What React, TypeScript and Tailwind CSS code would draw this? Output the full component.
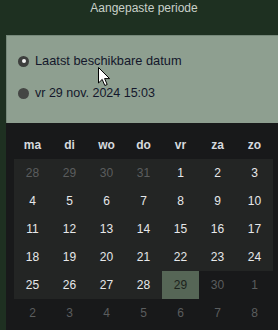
import React from "react";

const headers = ["ma", "di", "wo", "do", "vr", "za", "zo"];

type Cell = { d: number; muted: boolean; bg: "none" | "light" | "sel" };

const rows: Cell[][] = [
  [28, 29, 30, 31, 1, 2, 3].map((d, i) => ({ d, muted: i < 4, bg: "light" as const })),
  [4, 5, 6, 7, 8, 9, 10].map((d) => ({ d, muted: false, bg: "light" as const })),
  [11, 12, 13, 14, 15, 16, 17].map((d) => ({ d, muted: false, bg: "light" as const })),
  [18, 19, 20, 21, 22, 23, 24].map((d) => ({ d, muted: false, bg: "light" as const })),
  [25, 26, 27, 28, 29, 30, 1].map((d, i) => ({
    d,
    muted: i > 4,
    bg: i < 4 ? ("light" as const) : i === 4 ? ("sel" as const) : ("none" as const),
  })),
  [2, 3, 4, 5, 6, 7, 8].map((d) => ({ d, muted: true, bg: "none" as const })),
];

export default function App() {
  return (
    <div
      className="w-[278px] h-[330px] overflow-hidden bg-[#1e3021] flex flex-col"
      style={{ fontFamily: '"Liberation Sans", Arial, sans-serif' }}
    >
      <div className="h-[35px] flex justify-center pl-[10px] pt-[1px] text-[12px] text-[#c9d1c9] leading-[14px]">
        Aangepaste periode
      </div>
      <div className="ml-[6px] flex-1 flex flex-col">
        <div className="relative h-[88px] bg-[#8e9f90] border-t border-l border-[#76887a] flex flex-col pt-[18px] pl-[11px] gap-[18px]">
          <div className="flex items-center gap-[6px] h-[14px]">
            <div className="w-[11px] h-[11px] rounded-full bg-[#3d3f3d] flex items-center justify-center">
              <div className="w-[4px] h-[4px] rounded-full bg-[#f2f2f2]" />
            </div>
            <span className="text-[12.8px] leading-[14px] text-[#14172b]">Laatst beschikbare datum</span>
          </div>
          <div className="flex items-center gap-[6px] h-[14px]">
            <div className="w-[11px] h-[11px] rounded-full bg-[#444644]" />
            <span className="text-[12.5px] leading-[14px] text-[#14172b]">vr 29 nov. 2024 15:03</span>
          </div>
          <svg
            className="absolute left-[91px] top-[31px]"
            width="13"
            height="20"
            viewBox="0 0 13 20"
          >
            <path
              d="M0.5 0.5 L0.5 16 L4.2 12.4 L6.8 18.5 L9.2 17.5 L6.6 11.6 L11.6 11.6 Z"
              fill="#ffffff"
              stroke="#000000"
              strokeWidth="1"
              strokeLinejoin="miter"
            />
          </svg>
        </div>
        <div className="flex-1 bg-[#18191a] pl-[8px] pt-[15px]">
          <div className="grid grid-cols-[repeat(7,37px)] h-[21px] items-start">
            {headers.map((h) => (
              <div key={h} className="text-center text-[12px] font-bold text-[#d6d9de] leading-[14px]">
                {h}
              </div>
            ))}
          </div>
          <div className="grid grid-cols-[repeat(7,37px)]">
            {rows.flat().map((c, i) => (
              <div
                key={i}
                className={
                  "h-[28px] flex items-center justify-center text-[12px] leading-[14px] " +
                  (c.bg === "light"
                    ? "bg-[#232524] "
                    : c.bg === "sel"
                    ? "bg-[#566656] "
                    : "") +
                  (c.bg === "sel"
                    ? "text-[#1c221c]"
                    : c.muted
                    ? "text-[#5b5d5e]"
                    : "text-[#e6e8ea]")
                }
              >
                {c.d}
              </div>
            ))}
          </div>
        </div>
      </div>
    </div>
  );
}
